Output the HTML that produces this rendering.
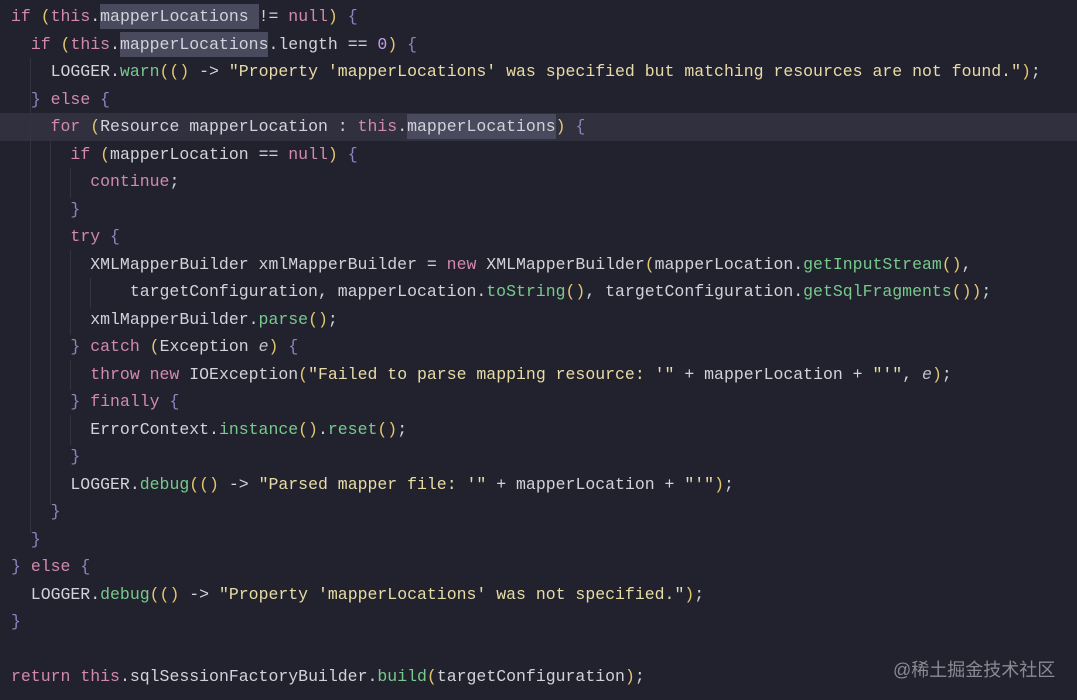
<!DOCTYPE html>
<html><head><meta charset="utf-8"><style>
html,body{margin:0;padding:0;background:#22222e;width:1077px;height:700px;overflow:hidden}
pre{margin:0;position:absolute;left:11px;top:3px;font-family:"Liberation Mono",monospace;font-size:16.5px;line-height:27.5px;color:#d2d2da}
.k{color:#d28aac}.m{color:#78c98d}.p{color:#e3c66e}.b{color:#8b86c2}.s{color:#e8dca6}.n{color:#c39ee0}.i{font-style:italic;color:#c0c0c8}
.h{background:#4a4a5e;padding:3px 0}
.cur{position:absolute;left:0;top:113px;width:1077px;height:28px;background:#30303f}
.g{position:absolute;width:1px;background:#34343f}
.wm{position:absolute;left:893px;top:656px;font-family:"Liberation Sans","Noto Sans CJK SC",sans-serif;font-size:18px;color:#8a8a94}
</style></head><body>
<div class="cur"></div>
<div class="g" style="left:30px;top:58px;height:475px"></div>
<div class="g" style="left:50px;top:140px;height:365px"></div>
<div class="g" style="left:70px;top:168px;height:30px"></div>
<div class="g" style="left:70px;top:250px;height:85px"></div>
<div class="g" style="left:90px;top:278px;height:30px"></div>
<div class="g" style="left:70px;top:360px;height:30px"></div>
<div class="g" style="left:70px;top:415px;height:30px"></div>
<pre><span class="k">if</span> <span class="p">(</span><span class="k">this</span>.<span class="h">mapperLocations </span>!= <span class="k">null</span><span class="p">)</span> <span class="b">{</span>
  <span class="k">if</span> <span class="p">(</span><span class="k">this</span>.<span class="h">mapperLocations</span>.length == <span class="n">0</span><span class="p">)</span> <span class="b">{</span>
    LOGGER.<span class="m">warn</span><span class="p">(()</span> -&gt; <span class="s">"Property 'mapperLocations' was specified but matching resources are not found."</span><span class="p">)</span>;
  <span class="b">}</span> <span class="k">else</span> <span class="b">{</span>
    <span class="k">for</span> <span class="p">(</span>Resource mapperLocation : <span class="k">this</span>.<span class="h">mapperLocations</span><span class="p">)</span> <span class="b">{</span>
      <span class="k">if</span> <span class="p">(</span>mapperLocation == <span class="k">null</span><span class="p">)</span> <span class="b">{</span>
        <span class="k">continue</span>;
      <span class="b">}</span>
      <span class="k">try</span> <span class="b">{</span>
        XMLMapperBuilder xmlMapperBuilder = <span class="k">new</span> XMLMapperBuilder<span class="p">(</span>mapperLocation.<span class="m">getInputStream</span><span class="p">()</span>,
            targetConfiguration, mapperLocation.<span class="m">toString</span><span class="p">()</span>, targetConfiguration.<span class="m">getSqlFragments</span><span class="p">())</span>;
        xmlMapperBuilder.<span class="m">parse</span><span class="p">()</span>;
      <span class="b">}</span> <span class="k">catch</span> <span class="p">(</span>Exception <span class="i">e</span><span class="p">)</span> <span class="b">{</span>
        <span class="k">throw new</span> IOException<span class="p">(</span><span class="s">"Failed to parse mapping resource: '"</span> + mapperLocation + <span class="s">"'"</span>, <span class="i">e</span><span class="p">)</span>;
      <span class="b">}</span> <span class="k">finally</span> <span class="b">{</span>
        ErrorContext.<span class="m">instance</span><span class="p">()</span>.<span class="m">reset</span><span class="p">()</span>;
      <span class="b">}</span>
      LOGGER.<span class="m">debug</span><span class="p">(()</span> -&gt; <span class="s">"Parsed mapper file: '"</span> + mapperLocation + <span class="s">"'"</span><span class="p">)</span>;
    <span class="b">}</span>
  <span class="b">}</span>
<span class="b">}</span> <span class="k">else</span> <span class="b">{</span>
  LOGGER.<span class="m">debug</span><span class="p">(()</span> -&gt; <span class="s">"Property 'mapperLocations' was not specified."</span><span class="p">)</span>;
<span class="b">}</span>

<span class="k">return</span> <span class="k">this</span>.sqlSessionFactoryBuilder.<span class="m">build</span><span class="p">(</span>targetConfiguration<span class="p">)</span>;</pre>
<div class="wm">@稀土掘金技术社区</div>
</body></html>
